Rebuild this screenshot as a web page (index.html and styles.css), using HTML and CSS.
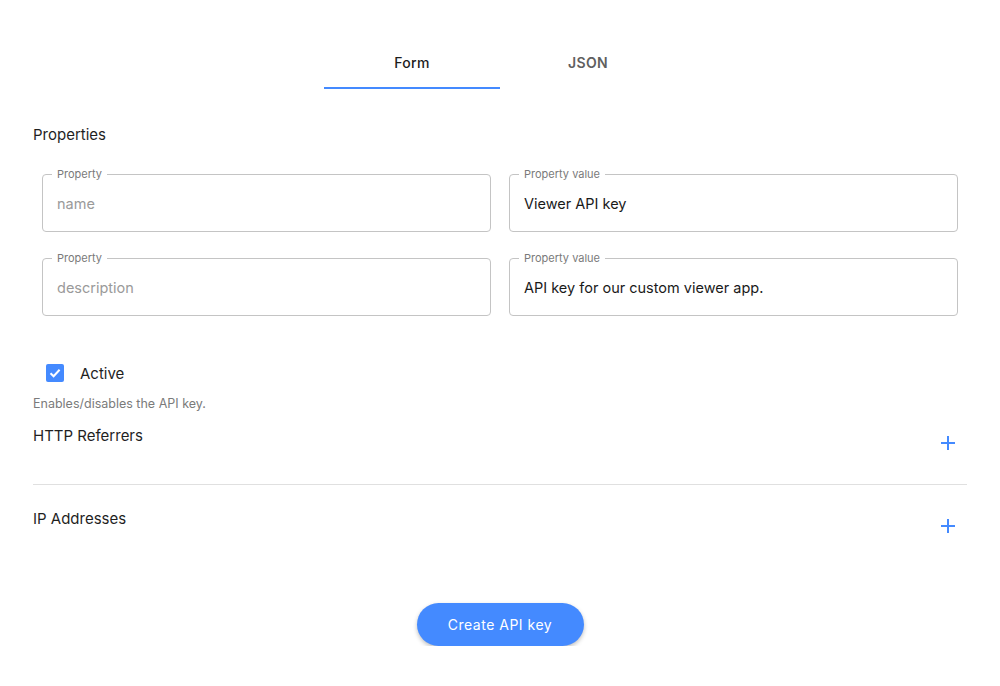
FILE: index.html
```html
<!DOCTYPE html>
<html>
<head>
<meta charset="utf-8">
<link rel="stylesheet" href="styles.css">
</head>
<body>
<div class="page">
  <div class="tabs">
    <div class="tab active">Form</div>
    <div class="tab">JSON</div>
  </div>

  <div class="section-title">Properties</div>

  <div class="grid">
    <div class="field">
      <span class="label">Property</span>
      <div class="value placeholder">name</div>
    </div>
    <div class="field">
      <span class="label">Property value</span>
      <div class="value">Viewer API key</div>
    </div>
    <div class="field">
      <span class="label">Property</span>
      <div class="value placeholder">description</div>
    </div>
    <div class="field">
      <span class="label">Property value</span>
      <div class="value">API key for our custom viewer app.</div>
    </div>
  </div>

  <div class="check-row">
    <span class="checkbox">
      <svg width="14" height="14" viewBox="0 0 14 14"><path d="M2.5 7.2 L5.6 10.2 L11.6 3.8" fill="none" stroke="#fff" stroke-width="2"/></svg>
    </span>
    <span class="check-label">Active</span>
  </div>
  <div class="help">Enables/disables the API key.</div>

  <div class="list-section">
    <div class="list-title">HTTP Referrers</div>
    <span class="plus">
      <svg width="14" height="14" viewBox="0 0 14 14"><path d="M7 0 V14 M0 7 H14" stroke="#448aff" stroke-width="2"/></svg>
    </span>
  </div>
  <div class="list-section second">
    <div class="list-title">IP Addresses</div>
    <span class="plus">
      <svg width="14" height="14" viewBox="0 0 14 14"><path d="M7 0 V14 M0 7 H14" stroke="#448aff" stroke-width="2"/></svg>
    </span>
  </div>

  <div class="actions">
    <button class="btn">Create API key</button>
  </div>
</div>
</body>
</html>
```

FILE: styles.css
```css
* { box-sizing: border-box; }
html, body { margin: 0; padding: 0; background: #fff; }
body {
  font-family: Inter, "Noto Sans", sans-serif;
  color: #1f1f1f;
}
.page {
  padding: 0 33px;
}
.tabs {
  display: flex;
  justify-content: center;
  padding-top: 44px;
}
.tab {
  width: 176px;
  height: 45px;
  text-align: center;
  font-size: 14px;
  font-weight: 600;
  line-height: 38px;
  color: #5f5f5f;
  letter-spacing: 0.3px;
}
.tab.active {
  color: #1d1d1d;
  font-weight: 500;
  border-bottom: 2px solid #448aff;
}
.section-title {
  margin-top: 36px;
  font-size: 15px;
  line-height: 20px;
}
.grid {
  display: grid;
  grid-template-columns: 449px 449px;
  column-gap: 18px;
  row-gap: 26px;
  margin-top: 29px;
  padding-left: 9px;
}
.field {
  position: relative;
  height: 58px;
  border: 1px solid #c4c4c4;
  border-radius: 4px;
  display: flex;
  align-items: center;
  padding: 0 14px;
}
.label {
  position: absolute;
  top: -8px;
  left: 9px;
  padding: 0 5px;
  background: #fff;
  font-size: 11px;
  line-height: 14px;
  color: #7a7a7a;
}
.value {
  font-size: 14.5px;
  color: #1a1a1a;
  padding-top: 1px;
}
.value.placeholder { color: #9a9a9a; }
.check-row {
  display: flex;
  align-items: center;
  margin-top: 46px;
  padding-left: 13px;
  height: 22px;
}
.checkbox {
  width: 18px;
  height: 18px;
  border-radius: 2px;
  background: #448aff;
  display: flex;
  align-items: center;
  justify-content: center;
}
.check-label {
  margin-left: 16px;
  font-size: 15px;
}
.help {
  margin-top: 12px;
  font-size: 12.5px;
  color: #7b7b7b;
  line-height: 16px;
}
.list-section {
  display: flex;
  justify-content: space-between;
  align-items: flex-start;
  height: 73px;
  padding-top: 14px;
  border-bottom: 1px solid #e0e0e0;
}
.list-section.second {
  border-bottom: none;
  margin-top: 22px;
  padding-top: 2px;
  height: 64px;
}
.list-title {
  font-size: 15px;
  line-height: 20px;
}
.plus {
  margin-top: 10px;
  margin-right: 12px;
  display: flex;
}
.actions {
  display: flex;
  justify-content: center;
  margin-top: 32px;
}
.btn {
  width: 167px;
  height: 43px;
  border: none;
  border-radius: 22px;
  background: #448aff;
  color: #fff;
  font-family: Inter, "Noto Sans", sans-serif;
  font-size: 14px;
  font-weight: 400;
  letter-spacing: 0.5px;
  box-shadow: 0 2px 4px rgba(0,0,0,0.25);
}
```
